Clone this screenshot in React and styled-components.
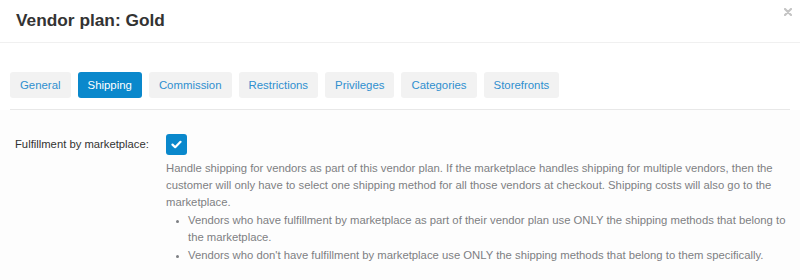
import React from "react";
import styled, { createGlobalStyle } from "styled-components";

const tabs = [
  "General",
  "Shipping",
  "Commission",
  "Restrictions",
  "Privileges",
  "Categories",
  "Storefronts",
];

const App = () => {
  return (
    <>
      <GlobalStyle />
      <Dialog>
        <Header>
          <Title>Vendor plan: Gold</Title>
          <CloseButton aria-label="Close">
            <svg width="8" height="8" viewBox="0 0 8 8">
              <path
                d="M1 1 L7 7 M7 1 L1 7"
                stroke="currentColor"
                strokeWidth="2.2"
                strokeLinecap="round"
              />
            </svg>
          </CloseButton>
        </Header>

        <TabsBar>
          {tabs.map((t) => (
            <Tab key={t} $active={t === "Shipping"}>
              {t}
            </Tab>
          ))}
        </TabsBar>

        <Content>
          <FieldRow>
            <Label>Fulfillment by marketplace:</Label>
            <Control>
              <Checkbox>
                <svg width="11" height="9" viewBox="0 0 11 9">
                  <path
                    d="M1.5 4.6 L4.2 7.2 L9.5 1.8"
                    fill="none"
                    stroke="#fff"
                    strokeWidth="2.2"
                    strokeLinecap="round"
                    strokeLinejoin="round"
                  />
                </svg>
              </Checkbox>
              <Help>
                <p>
                  Handle shipping for vendors as part of this vendor plan. If
                  the marketplace handles shipping for multiple vendors, then
                  the customer will only have to select one shipping method for
                  all those vendors at checkout. Shipping costs will also go to
                  the marketplace.
                </p>
                <ul>
                  <li>
                    Vendors who have fulfillment by marketplace as part of their
                    vendor plan use ONLY the shipping methods that belong to the
                    marketplace.
                  </li>
                  <li>
                    Vendors who don't have fulfillment by marketplace use ONLY
                    the shipping methods that belong to them specifically.
                  </li>
                </ul>
              </Help>
            </Control>
          </FieldRow>
        </Content>
      </Dialog>
    </>
  );
};

const GlobalStyle = createGlobalStyle`
  html, body {
    margin: 0;
    padding: 0;
    background: #fff;
  }
  body {
    font-family: "Liberation Sans", Arial, sans-serif;
  }
`;

const Dialog = styled.div`
  width: 800px;
  height: 280px;
  background: #fff;
  overflow: hidden;
`;

const Header = styled.div`
  display: flex;
  justify-content: space-between;
  align-items: flex-start;
  height: 42px;
  padding: 0 8px 0 16px;
  border-bottom: 1px solid #f0f0f0;
  box-sizing: content-box;
`;

const Title = styled.h1`
  margin: 0;
  padding-top: 10px;
  font-size: 17.3px;
  line-height: 20px;
  font-weight: 700;
  color: #333;
`;

const CloseButton = styled.button`
  display: flex;
  align-items: center;
  justify-content: center;
  margin-top: 8px;
  padding: 0;
  width: 8px;
  height: 8px;
  border: none;
  background: none;
  color: #c4c4c4;
  cursor: pointer;
`;

const TabsBar = styled.div`
  display: flex;
  gap: 7px;
  margin: 29px 10px 0;
  padding-bottom: 11px;
  border-bottom: 1px solid #e8e8e8;
`;

const Tab = styled.div`
  display: flex;
  align-items: center;
  height: 26px;
  padding: 0 10px;
  border-radius: 3px;
  font-size: 11.4px;
  background: ${(p) => (p.$active ? "#0a88cc" : "#f2f2f2")};
  color: ${(p) => (p.$active ? "#fff" : "#2f8fcf")};
  cursor: pointer;
`;

const Content = styled.div`
  background: #fdfdfd;
  padding: 24px 10px 0 15px;
  height: 200px;
`;

const FieldRow = styled.div`
  display: grid;
  grid-template-columns: 151px 1fr;
`;

const Label = styled.div`
  font-size: 11.25px;
  line-height: 21px;
  color: #333;
`;

const Control = styled.div`
  display: flex;
  flex-direction: column;
  align-items: flex-start;
`;

const Checkbox = styled.div`
  display: flex;
  align-items: center;
  justify-content: center;
  width: 21px;
  height: 21px;
  border-radius: 3px;
  background: #0a88cc;
`;

const Help = styled.div`
  margin-top: 5px;
  font-size: 11.3px;
  line-height: 17px;
  color: #7d7f83;

  p {
    margin: 0;
  }

  ul {
    margin: 1px 0 0;
    padding-left: 22px;
  }

  li {
    margin-bottom: 0.5px;
  }

  li::marker {
    font-size: 9px;
  }
`;

export default App;
